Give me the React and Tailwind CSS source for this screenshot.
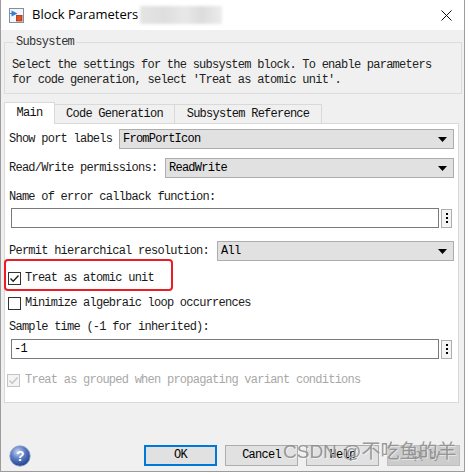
import React from "react";

const mono = "font-['Liberation_Mono',monospace] text-[12px] tracking-[-0.75px]";

function Arrow() {
  return (
    <svg width="9" height="5" viewBox="0 0 9 5" className="mr-[6px]">
      <path d="M0 0 H9 L4.5 5 Z" fill="#000" />
    </svg>
  );
}

function Dropdown({ value, width }) {
  return (
    <div
      className={`flex items-center justify-between h-[20px] bg-[#e1e1e1] border border-[#adadad] ${width}`}
    >
      <span className="pl-[3px] text-black">{value}</span>
      <Arrow />
    </div>
  );
}

function TextField({ value }) {
  return (
    <div className="flex items-center ml-[2px] gap-[2px]">
      <div className="w-[428px] h-[20px] border border-[#7a7a7a] bg-white flex items-center pl-[2px] text-black">
        {value}
      </div>
      <div className="w-[11px] h-[19px] border border-[#adadad] bg-[#f4f4f4] flex flex-col items-center justify-center gap-[2px]">
        <span className="w-[2px] h-[2px] bg-black" />
        <span className="w-[2px] h-[2px] bg-black" />
        <span className="w-[2px] h-[2px] bg-black" />
      </div>
    </div>
  );
}

function Checkbox({ checked, disabled }) {
  return (
    <div
      className={`w-[13px] h-[13px] border flex items-center justify-center ${
        disabled ? "border-[#c4c4c4] bg-[#f4f4f4]" : "border-[#333] bg-white"
      }`}
    >
      {checked && (
        <svg width="11" height="11" viewBox="0 0 11 11">
          <path
            d="M1.5 5.5 L4.2 8.2 L9.5 2.5"
            fill="none"
            stroke={disabled ? "#c4c4c4" : "#222"}
            strokeWidth="1.4"
          />
        </svg>
      )}
    </div>
  );
}

function TitleIcon() {
  return (
    <svg width="15" height="15" viewBox="0 0 15 15">
      <rect x="0.5" y="0.5" width="14" height="14" fill="#f4f6f9" stroke="#7f8fa6" />
      <path d="M2.5 2.5 L8.5 5.5 L2.5 8.5 Z" fill="#2f7fd6" />
      <path d="M1 5.5 H3" stroke="#2f7fd6" strokeWidth="1" />
      <rect x="7.5" y="7.5" width="5.5" height="5.5" fill="#e0531f" stroke="#a33010" strokeWidth="0.8" />
    </svg>
  );
}

function HelpIcon() {
  return (
    <svg width="22" height="22" viewBox="0 0 22 22">
      <defs>
        <radialGradient id="hg" cx="40%" cy="30%" r="75%">
          <stop offset="0%" stopColor="#c9d6f0" />
          <stop offset="45%" stopColor="#5d7fc7" />
          <stop offset="100%" stopColor="#1c3a8a" />
        </radialGradient>
      </defs>
      <circle cx="11" cy="11" r="10.2" fill="url(#hg)" stroke="#8a9cc4" strokeWidth="0.8" />
      <text
        x="11"
        y="16"
        textAnchor="middle"
        fontFamily="Liberation Sans, sans-serif"
        fontWeight="bold"
        fontSize="14"
        fill="#fff"
      >
        ?
      </text>
    </svg>
  );
}

export default function App() {
  return (
    <div className="w-[469px] h-[473px] bg-white overflow-hidden">
      <div className="w-[465px] h-[472px] border-l border-r border-b border-[#9c9c9c] flex flex-col">
        {/* title bar */}
        <div className="h-[30px] bg-white flex items-center relative">
          <div className="ml-[8px] mt-[1px]">
            <TitleIcon />
          </div>
          <span className="ml-[8px] font-['Open_Sans',sans-serif] text-[13px] text-black">
            Block Parameters
          </span>
          <div className="ml-[2px] w-[82px] h-[18px] bg-[linear-gradient(90deg,#e4e4e4,#dedede_30%,#e8e8e8_55%,#dcdcdc_75%,#ececec)] blur-[1.5px]" />
          <svg width="11" height="11" viewBox="0 0 11 11" className="ml-auto mr-[12px]">
            <path d="M0.5 0.5 L10.5 10.5 M10.5 0.5 L0.5 10.5" stroke="#111" strokeWidth="1" />
          </svg>
        </div>

        {/* body */}
        <div className={`flex-1 bg-[#f0f0f0] pl-[3px] flex flex-col ${mono}`}>
          <fieldset className="mt-[5px] w-[458px] border border-[#dcdcdc] px-[7px] pt-[9px] pb-[5px] leading-[15px] text-[#222]">
            <legend className="ml-[2px] px-[2px] leading-[14px] text-[#333]">Subsystem</legend>
            <div>Select the settings for the subsystem block. To enable parameters</div>
            <div>for code generation, select 'Treat as atomic unit'.</div>
          </fieldset>

          {/* tabs */}
          <div className="mt-[7px] flex items-end h-[22px]">
            <div className="relative z-10 -mb-px w-[51px] h-[22px] bg-white border border-b-0 border-[#d9d9d9] flex items-center justify-center pb-[1px] text-[#111]">
              Main
            </div>
            <div className="w-[120px] h-[19px] bg-[#f0f0f0] border border-b-0 border-l-0 border-[#d9d9d9] flex items-center justify-center text-[#111]">
              Code Generation
            </div>
            <div className="w-[147px] h-[19px] bg-[#f0f0f0] border border-b-0 border-l-0 border-[#d9d9d9] flex items-center justify-center text-[#111]">
              Subsystem Reference
            </div>
          </div>

          {/* panel */}
          <div className="w-[455px] bg-white border border-[#d9d9d9] pl-[4px] pr-[4px] pb-[14px] flex flex-col text-[#1a1a1a]">
            <div className="mt-[5px] flex items-center justify-between">
              <span>Show port labels</span>
              <Dropdown value="FromPortIcon" width="w-[335px]" />
            </div>
            <div className="mt-[9px] flex items-center justify-between">
              <span>Read/Write permissions:</span>
              <Dropdown value="ReadWrite" width="w-[289px]" />
            </div>
            <div className="mt-[11px] h-[16px] flex items-center">Name of error callback function:</div>
            <div className="mt-[3px]">
              <TextField value="" />
            </div>
            <div className="mt-[13px] flex items-center justify-between">
              <span>Permit hierarchical resolution:</span>
              <Dropdown value="All" width="w-[237px]" />
            </div>
            <div className="relative mt-[9px] h-[16px] flex items-center gap-[4px] -ml-px">
              <Checkbox checked />
              <span>Treat as atomic unit</span>
              <div className="absolute left-[-4px] top-[-11px] w-[169px] h-[32px] border-2 border-[#ec1c24] rounded-[4px]" />
            </div>
            <div className="mt-[9px] h-[16px] flex items-center gap-[4px] -ml-px">
              <Checkbox />
              <span>Minimize algebraic loop occurrences</span>
            </div>
            <div className="mt-[8px] h-[16px] flex items-center">Sample time (-1 for inherited):</div>
            <div className="mt-[4px]">
              <TextField value="-1" />
            </div>
            <div className="mt-[13px] h-[16px] flex items-center gap-[5px] -ml-[2px] text-[#a8a8a8]">
              <Checkbox checked disabled />
              <span>Treat as grouped when propagating variant conditions</span>
            </div>
          </div>

          {/* buttons */}
          <div className="relative mt-[40px] flex items-center">
            <div className="ml-[5px] mt-[2px]">
              <HelpIcon />
            </div>
            <div className="ml-auto mr-[4px] flex gap-[8px]">
              <div className="w-[73px] h-[21px] bg-[#e1e1e1] border-2 border-[#0078d7] flex items-center justify-center text-black">
                OK
              </div>
              <div className="w-[73px] h-[21px] bg-[#e1e1e1] border border-[#adadad] flex items-center justify-center text-black">
                Cancel
              </div>
              <div className="w-[73px] h-[21px] bg-[#e1e1e1] border border-[#adadad] flex items-center justify-center text-black">
                Help
              </div>
              <div className="w-[73px] h-[21px] bg-[#cccccc] border border-[#bfbfbf] flex items-center justify-center text-[#8a8a8a]">
                Apply
              </div>
            </div>
            <div className="absolute left-[279px] top-[-3px] font-['Liberation_Sans','Noto_Sans_CJK_SC',sans-serif] text-[19px] tracking-normal leading-[24px] text-[#8d8d8d]/90 [text-shadow:1px_1px_0_rgba(255,255,255,0.5)]">
              CSDN @不吃鱼的羊
            </div>
          </div>
        </div>
      </div>
    </div>
  );
}
